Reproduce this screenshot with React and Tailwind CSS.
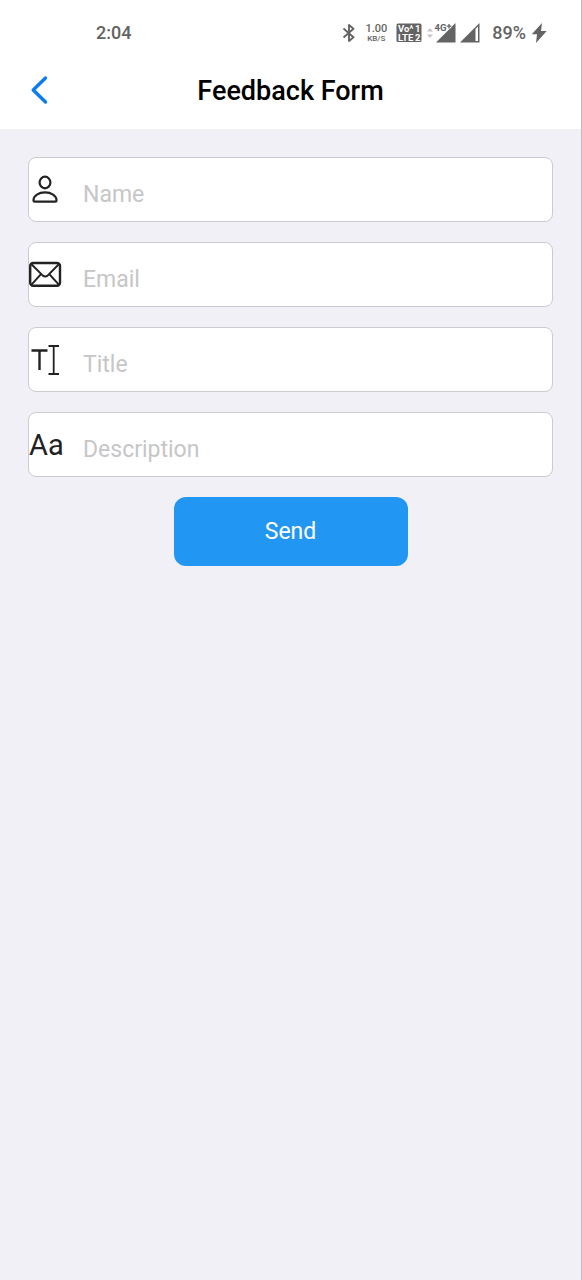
import React from "react";

function BluetoothIcon() {
  return (
    <svg aria-hidden="true" className="h-5 w-3.5 shrink-0" viewBox="0 0 14 20" fill="none" stroke="currentColor" strokeWidth="1.9" strokeLinejoin="round">
      <path d="M1.500 5.500l10 8.800L7 18V2l4.500 3.700-10 8.800" />
    </svg>
  );
}

function VolteIcon() {
  return (
    <svg aria-label="VoLTE 1 2" role="img" className="h-5 w-[26px] shrink-0" viewBox="0 0 26 20">
      <rect x="0.5" y="0.5" width="25" height="18.5" rx="1.5" fill="currentColor" />
      <g fill="#fff" fontFamily="Roboto, sans-serif" fontWeight="700">
        <text x="2" y="9" fontSize="9.5">Vo</text>
        <text x="13.5" y="6" fontSize="5.5">A</text>
        <text x="19" y="9" fontSize="9.5">1</text>
        <text x="2" y="18" fontSize="9.5">LTE</text>
        <text x="19" y="18" fontSize="9.5">2</text>
      </g>
    </svg>
  );
}

function MobileSignalIcon() {
  return (
    <svg aria-label="4G+" role="img" className="h-5 w-[30px] shrink-0" viewBox="0 0 30 20">
      <path d="M1 8.5L4 5l3 3.5zM1 11.5l3 3.5 3-3.5z" fill="#c4c4c4" />
      <path d="M29.500 0v19.500H10z" fill="currentColor" />
      <text x="8.500" y="8" fontSize="9.500" fontFamily="Roboto, sans-serif" fontWeight="700" fill="currentColor" stroke="#fff" strokeWidth="1.600" paintOrder="stroke">4G</text>
      <path d="M23 1v4.500M20.700 3.200h4.600" stroke="#fff" strokeWidth="2.600" />
      <path d="M23 1v4.500M20.700 3.200h4.600" stroke="currentColor" strokeWidth="1.300" />
    </svg>
  );
}

function SecondSignalIcon() {
  return (
    <svg aria-hidden="true" className="h-5 w-5 shrink-0" viewBox="0 0 20 20">
      <path d="M19.5 0v19.5H0z" fill="currentColor" />
      <path d="M15.5 6l2.500-2.500V18h-2.500z" fill="#fff" />
    </svg>
  );
}

function BoltIcon() {
  return (
    <svg aria-hidden="true" className="h-5 w-4 shrink-0" viewBox="0 0 16 20" fill="currentColor">
      <path d="M11 0L.8 11.200h5.200L5 20 15.700 8H10z" />
    </svg>
  );
}

function PersonIcon() {
  return (
    <svg aria-hidden="true" className="size-9" viewBox="0 0 36 36" fill="none" stroke="currentColor" strokeWidth="2.200" strokeLinejoin="round">
      <ellipse cx="16" cy="10.500" rx="5.400" ry="5.800" />
      <path d="M16 20.300c-6.300 0-11.500 3.500-11.500 7.900 0 1 .6 1.400 1.500 1.400h20c.9 0 1.500-.4 1.500-1.400 0-4.400-5.200-7.900-11.500-7.900z" />
    </svg>
  );
}

function MailIcon() {
  return (
    <svg aria-hidden="true" className="size-9" viewBox="0 0 36 36" fill="none" stroke="currentColor" strokeWidth="2">
      <rect x="1.200" y="6" width="29.800" height="22.800" rx="3" strokeWidth="2.400" />
      <path d="M2.500 7.300l11.300 11.300q2.400 1.800 4.800 0L29.800 7.300M2.500 27.700l9.500-10.500M29.800 27.700l-9.500-10.500" />
    </svg>
  );
}

function TextCursorIcon() {
  return (
    <svg aria-hidden="true" className="size-9" viewBox="0 0 36 36" fill="none" stroke="currentColor">
      <path d="M2.500 8.500h16M10.500 8.500v19.500" strokeWidth="2.400" />
      <path d="M19.500 4h10.500M19.500 32h10.500M24.700 4v28" strokeWidth="1.800" />
    </svg>
  );
}

function LettersIcon() {
  return <span aria-hidden="true" className="text-[29px] leading-9">Aa</span>;
}

const fields = [
  { id: "name", label: "Name", type: "text", Icon: PersonIcon },
  { id: "email", label: "Email", type: "email", Icon: MailIcon },
  { id: "title", label: "Title", type: "text", Icon: TextCursorIcon },
  { id: "description", label: "Description", type: "text", Icon: LettersIcon },
];

function StatusBar() {
  return (
    <div className="flex h-[66px] items-center pr-[34px] pl-24 text-lg text-[#636363]">
      <span className="font-medium">2:04</span>
      <div className="ml-auto flex items-center">
        <BluetoothIcon />
        <div className="ml-2 flex w-6 flex-col items-center font-medium">
          <span className="text-[11px] leading-[11px]">1.00</span>
          <span className="text-[8px] leading-[9px]">KB/S</span>
        </div>
        <div className="ml-2 flex gap-1">
          <VolteIcon />
          <MobileSignalIcon />
          <SecondSignalIcon />
        </div>
        <span className="ml-3 font-medium">89%</span>
        <span className="ml-[5px]"><BoltIcon /></span>
      </div>
    </div>
  );
}

export default function App() {
  return (
    <div className="flex min-h-screen flex-col border-r border-[#bdbdc0] bg-[#f1f0f7] font-[Roboto,sans-serif]">
      <header className="bg-white">
        <StatusBar />
        <div className="grid grid-cols-[1fr_auto_1fr] items-center px-7 pb-[15px]">
          <button type="button" aria-label="Back" className="flex h-12 w-6 items-center text-[#0a7cf0]">
            <svg aria-hidden="true" className="h-8 w-6" viewBox="0 0 24 32" fill="none" stroke="currentColor" strokeWidth="3.400" strokeLinecap="round" strokeLinejoin="round">
              <path d="M17.500 4L5.200 16l12.300 12" />
            </svg>
          </button>
          <h1 className="pt-0.5 text-[27px] leading-[46px] font-medium text-black">Feedback Form</h1>
        </div>
      </header>
      <main className="px-7 pt-7">
        <form className="flex flex-col gap-5" onSubmit={(e) => e.preventDefault()}>
          {fields.map(({ id, label, type, Icon }) => (
            <div key={id} className="flex h-[65px] items-center rounded-lg border border-[#cbcbd0] bg-white text-[#222]">
              <label htmlFor={id} aria-label={label} className="flex w-[54px] shrink-0">
                <Icon />
              </label>
              <input
                id={id}
                type={type}
                placeholder={label}
                className="h-full min-w-0 flex-1 bg-transparent pt-2.5 text-[23px] outline-none placeholder:text-[#c6c6c8]"
              />
            </div>
          ))}
          <button type="submit" className="h-[69px] w-[234px] self-center rounded-xl bg-[#2196f3] pt-0.5 text-[23px] text-white">
            Send
          </button>
        </form>
      </main>
    </div>
  );
}
